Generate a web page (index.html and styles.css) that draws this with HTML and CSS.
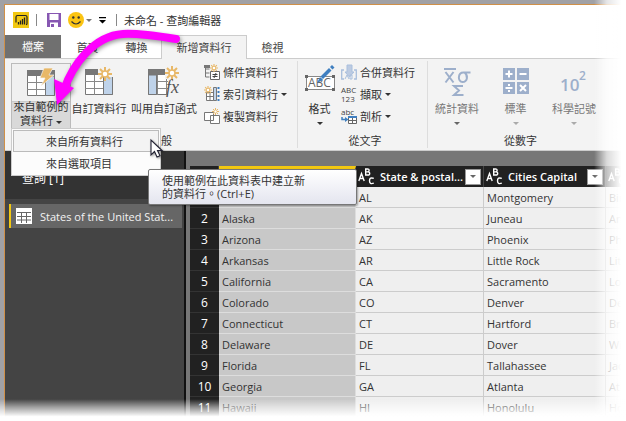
FILE: index.html
```html
<!DOCTYPE html>
<html lang="zh-Hant">
<head>
<meta charset="utf-8">
<title>未命名 - 查詢編輯器</title>
<link rel="stylesheet" href="styles.css">
</head>
<body>
<svg class="defs" aria-hidden="true">
  <symbol id="spark" viewBox="0 0 14 14">
    <g stroke="#e8b868" stroke-width="2"><path d="M7 0v4M7 10v4M0 7h4M10 7h4M2 2l3 3M9 9l3 3M12 2L9 5M5 9l-3 3"/></g>
    <circle cx="7" cy="7" r="3" fill="#fff" stroke="#e8b868" stroke-width="1.5"/>
  </symbol>
  <symbol id="grid" viewBox="0 0 28 26">
    <path d="M.5 .5h27v25h-27z" fill="#fff" stroke="#777"/>
    <path d="M0 0h28v6H0z" fill="#777"/>
    <path d="M9.500 6v20M18.500 6v20M0 12.500h28M0 19.500h28" stroke="#888"/>
  </symbol>
  <symbol id="abc" viewBox="0 0 17 17">
    <g fill="none" stroke="#fff" stroke-width="1.400"><path d="M.8 13L3.500 5.500L6.200 13M1.800 10.500h3.400M7.700 1v6h2q2 0 2-1.600t-2-1.500h-2h1.700q1.700 0 1.700-1.500T9.400 1zM15.800 10.300q-4.300-1.400-4.300 2.500t4.300 2.400"/></g>
  </symbol>
</svg>
<div class="window">
  <header class="titlebar">
    <svg class="logo" width="16" height="16" viewBox="0 0 16 16"><path d="M0 0h16v16H0z" fill="#f2c811"/><path d="M3 10.500V5q0-1.500 1.500-1.500h8Q14 3.500 14 5v6.500q0 1-1 1.200" fill="none" stroke="#222" stroke-width="1.200"/><path d="M5.500 12.500V10M7.500 12.500V8.500M9.500 12.500V7M11.500 12.500V5.500" stroke="#222" stroke-width="1.300"/></svg>
    <span class="bar"></span>
    <button class="plain save" aria-label="儲存"><svg width="14" height="14" viewBox="0 0 14 14"><path d="M0 0h14v14H0z" fill="#8757b2"/><path d="M2.500 1h9v6h-9zM3 9.500h8V14H3z" fill="#fff"/><path d="M4 11h3v3H4z" fill="#8757b2"/></svg></button>
    <button class="plain smile" aria-label="意見反應"><svg width="16" height="16" viewBox="0 0 16 16"><circle cx="8" cy="8" r="8" fill="#fbc412"/><circle cx="5.300" cy="5.500" r="1.200" fill="#333"/><circle cx="10.700" cy="5.500" r="1.200" fill="#333"/><path d="M3.500 9.500q4.500 5 9 0" fill="none" stroke="#333" stroke-width="1.200"/></svg><i class="caret grey"></i></button>
    <button class="plain quick" aria-label="自訂快速存取工具列"><svg width="7" height="7" viewBox="0 0 7 7"><path d="M0 0h7v1.200H0zM0 3h7L3.500 6.500z"/></svg></button>
    <span class="bar"></span>
    <h1>未命名 - 查詢編輯器</h1>
  </header>
  <nav class="tabs">
    <button class="tab file">檔案</button>
    <button class="tab">首頁</button>
    <button class="tab">轉換</button>
    <button class="tab active">新增資料行</button>
    <button class="tab">檢視</button>
  </nav>
  <section class="ribbon">
    <div class="group general">
      <div class="tools">
        <div class="split">
          <button class="big"><svg width="28" height="28" viewBox="0 0 28 28"><use href="#grid" y="2" width="28" height="26"/><path d="M18.500 8h9v19.500h-9z" fill="#bfd3ea" stroke="#777"/><path d="M17 0h9l-4 7h5L14 18l4-8h-5z" fill="#e8b868" stroke="#f3f3f3" stroke-width=".7"/></svg><span>來自範例的<br>資料行 <i class="caret"></i></span></button>
          <div class="menu">
            <button class="item hover">來自所有資料行</button>
            <button class="item">來自選取項目</button>
            <svg class="cursor" width="13" height="19" viewBox="0 0 13 19"><path d="M1 1v15l3.500-3.500L7 18l3-1.300L7.500 11.500H12z" fill="#fff" stroke="#223" stroke-width="1.100"/></svg>
            <div class="tooltip" role="tooltip">使用範例在此資料表中建立新<br>的資料行。(Ctrl+E)</div>
          </div>
        </div>
        <button class="big custom"><svg width="28" height="28" viewBox="0 0 28 28"><use href="#grid" y="2" width="28" height="26"/><path d="M18.500 8h9v19.500h-9z" fill="#bfd3ea" stroke="#777"/><path d="M13 0h15v10H13z" fill="#f3f3f3"/><use href="#spark" x="13" width="14" height="14"/></svg><span>自訂資料行</span></button>
        <button class="big invoke"><svg width="32" height="30" viewBox="0 0 32 30"><use href="#grid" y="3" width="28" height="26"/><path d="M.5 9h8v19.500h-8z" fill="#bfd3ea" stroke="#777"/><path d="M17 0h15v13H17zM20 13h12v17H20z" fill="#f3f3f3"/><use href="#spark" x="17" width="14" height="14"/><text x="18" y="27" class="fx">fx</text></svg><span>叫用自訂函式</span></button>
        <div class="stack">
          <button class="small"><svg width="16" height="16" viewBox="0 0 16 16"><path d="M1.500 2v11M1.500 5h4M1.500 9h4M1.500 13h4" stroke="#777" fill="none"/><path d="M0 1h6v3H0z" fill="#777"/><path d="M6.500 7.500h9v8h-9z" fill="#fff" stroke="#666"/><path d="M8.500 10.500h5M8.500 12.500h5M12 9l-2 5" stroke="#444"/><use href="#spark" x="6" width="8" height="8"/></svg>條件資料行</button>
          <button class="small"><svg width="16" height="16" viewBox="0 0 16 16"><path d="M2.500 6.500h7v8h-7zM2.500 10.500h7M6 7v8" fill="#fff" stroke="#777"/><path d="M9.500 1.500h3v13h-3z" fill="#bfd3ea" stroke="#777"/><path d="M14.500 1v14" stroke="#3f7fc0" stroke-width="2" stroke-dasharray="2 2"/><use href="#spark" width="8" height="8"/></svg>索引資料行 <i class="caret"></i></button>
          <button class="small"><svg width="16" height="16" viewBox="0 0 16 16"><path d="M.5 4.500h9v8h-9zM6.500 7.500h9v8h-9z" fill="#fff" stroke="#777"/><use href="#spark" x="8" width="7" height="7"/></svg>複製資料行</button>
        </div>
      </div>
      <p>一般</p>
    </div>
    <div class="group text">
      <div class="tools">
        <button class="big format"><svg width="30" height="26" viewBox="0 0 30 26"><path d="M1.500 11.500h28v13h-28z" fill="#fff" stroke="#888"/><path d="M0 10h3v3H0zM27 10h3v3h-3zM0 23h3v3H0zM27 23h3v3h-3z" fill="#666"/><text x="3" y="22" class="abc">ABC</text><path d="M12 18l3-6 3 3zM15.500 11.500L24 3l2.500 2.500L18 14zM25 2l2-2 2.500 2.500-2 2z" fill="#3f7fc0"/></svg><span>格式<br><i class="caret"></i></span></button>
        <div class="stack">
          <button class="small"><svg width="16" height="16" viewBox="0 0 16 16"><path d="M3 6H.7v9H3M13 6h2.300v9H13" fill="none" stroke="#a9bfdd" stroke-width="1.300"/><path d="M6 1h5v7h2l-4.500 5L4 8h2z" fill="#bccbe2" stroke="#a9bfdd"/><path d="M4 15l2-4 2 4M9 15v-4h2v4z" fill="none" stroke="#a9bfdd"/></svg>合併資料行</button>
          <button class="small"><svg width="16" height="16" viewBox="0 0 16 16"><text y="7" class="mini">ABC</text><text y="16" class="mini">123</text></svg>擷取 <i class="caret"></i></button>
          <button class="small"><svg width="16" height="16" viewBox="0 0 16 16"><text y="7" class="mini">abc</text><path d="M7.500 9.500h8v6h-8zM7.500 12.500h8M11.500 10v6" fill="#fff" stroke="#666"/><path d="M7 8h9v2H7z" fill="#3f7fc0"/><path d="M1 9v2.500h4" fill="none" stroke="#3f7fc0" stroke-width="1.500"/><path d="M4 9l3.500 2.500L4 14z" fill="#3f7fc0"/></svg>剖析 <i class="caret"></i></button>
        </div>
      </div>
      <p>從文字</p>
    </div>
    <div class="group number">
      <div class="tools">
        <button class="big off"><svg width="28" height="28" viewBox="0 0 28 28" fill="none" stroke="#9dafcb" stroke-width="2"><path d="M1 1h12M2.500 4l8 10.500M10.500 4l-8 10.500M27.500 4.500h-7c-6 0-6 9.500-1 9.500s6-6.500 2-9.500M20 18h-9l5 4.500-5 4.500h9.500"/></svg><span>統計資料<br><i class="caret"></i></span></button>
        <button class="big off pale"><svg width="26" height="26" viewBox="0 0 26 26"><path d="M0 0h12v12H0zM14 0h12v12H14zM0 14h12v12H0zM14 14h12v12H14z" fill="#9dafcb"/><path d="M2.500 6h7M6 2.500v7M16.500 6h7M2.500 20h7M6 16v2M6 22v2M17 17l6 6M23 17l-6 6" stroke="#fff" stroke-width="2"/></svg><span>標準<br><i class="caret"></i></span></button>
        <button class="big off pale"><svg width="28" height="26" viewBox="0 0 28 26"><text x="0" y="23" class="ten">10</text><text x="19" y="12" class="two">2</text></svg><span>科學記號<br><i class="caret"></i></span></button>
      </div>
      <p>從數字</p>
    </div>
  </section>
  <div class="work">
    <aside class="queries">
      <h2>查詢 [1]</h2>
      <a class="query" href="#table"><svg width="16" height="16" viewBox="0 0 16 16"><path d="M0 0h16v16H0z" fill="#fff"/><path d="M1 4.500h14M1 8.500h14M1 12h14M5.500 4v11M10.500 4v11" stroke="#666"/></svg><span>States of the United Stat...</span></a>
    </aside>
    <main id="table">
      <table>
        <colgroup><col class="c-num"><col class="c-name"><col class="c-code"><col class="c-city"><col></colgroup>
        <thead><tr>
          <th></th>
          <th class="selected"><div><svg width="17" height="17"><use href="#abc"/></svg><span></span><button aria-label="篩選"><i class="caret"></i></button></div></th>
          <th><div><svg width="17" height="17"><use href="#abc"/></svg><span>State &amp; postal...</span><button aria-label="篩選"><i class="caret"></i></button></div></th>
          <th><div><svg width="17" height="17"><use href="#abc"/></svg><span>Cities Capital</span><button aria-label="篩選"><i class="caret"></i></button></div></th>
          <th><div><svg width="17" height="17"><use href="#abc"/></svg></div></th>
        </tr></thead>
        <tbody>
          <tr><th></th><td></td><td>AL</td><td>Montgomery</td><td>Birmingham</td></tr>
          <tr><th>2</th><td>Alaska</td><td>AK</td><td>Juneau</td><td>Anchorage</td></tr>
          <tr><th>3</th><td>Arizona</td><td>AZ</td><td>Phoenix</td><td>Phoenix</td></tr>
          <tr><th>4</th><td>Arkansas</td><td>AR</td><td>Little Rock</td><td>Little Rock</td></tr>
          <tr><th>5</th><td>California</td><td>CA</td><td>Sacramento</td><td>Los Angeles</td></tr>
          <tr><th>6</th><td>Colorado</td><td>CO</td><td>Denver</td><td>Denver</td></tr>
          <tr><th>7</th><td>Connecticut</td><td>CT</td><td>Hartford</td><td>Bridgeport</td></tr>
          <tr><th>8</th><td>Delaware</td><td>DE</td><td>Dover</td><td>Wilmington</td></tr>
          <tr><th>9</th><td>Florida</td><td>FL</td><td>Tallahassee</td><td>Jacksonville</td></tr>
          <tr><th>10</th><td>Georgia</td><td>GA</td><td>Atlanta</td><td>Atlanta</td></tr>
          <tr><th>11</th><td>Hawaii</td><td>HI</td><td>Honolulu</td><td>Honolulu</td></tr>
        </tbody>
      </table>
    </main>
  </div>
  <svg class="arrow" width="140" height="90" viewBox="0 0 140 90" aria-hidden="true"><path d="M130 19Q92 13 77 14C47 16 26 46 18 70" fill="none" stroke="#f0f" stroke-width="8" stroke-linecap="round"/><path d="M8 59l20 9L11 85z" fill="#f0f"/></svg>
</div>
</body>
</html>
```
FILE: styles.css
```css
* { box-sizing: border-box; }
body {
  margin: 0;
  background: #a1a1a5;
  font: 11px/13px "Open Sans", "Noto Sans CJK TC", sans-serif;
  color: #333;
}
button { font: inherit; color: inherit; border: 0; background: none; padding: 0; margin: 0; }
h1, h2, p { margin: 0; font: inherit; }
svg { display: block; flex: none; overflow: visible; }
.defs { position: absolute; width: 0; height: 0; overflow: hidden; }
.window {
  position: relative;
  display: flex;
  flex-direction: column;
  height: calc(100vh - 4px);
  margin: 4px 0 0 4px;
  border: solid #d09048;
  border-width: 1px 0 0 1px;
  background: #fff;
}
/* soft edges on the right and bottom */
body::before, body::after { content: ""; position: fixed; right: 0; bottom: 0; z-index: 9; pointer-events: none; }
body::before { top: 0; width: 32px; background: linear-gradient(to right, transparent, #fffb 40%, #fff 85%); }
body::after { left: 0; height: 22px; background: linear-gradient(transparent, #fff8 40%, #fff 80%); }

.caret {
  display: inline-block;
  vertical-align: middle;
  border: 3px solid transparent;
  border-top-color: #333;
  border-bottom: 0;
}
.caret.grey { border-top-color: #777; }

.titlebar { display: flex; align-items: center; height: 30px; padding: 0 8px; }
.bar { width: 1px; height: 12px; background: #888; }
.logo { margin-right: 7px; }
.plain { display: flex; align-items: center; gap: 2px; }
.save { margin-left: 10px; }
.smile { margin-left: 7px; }
.quick { margin: 0 10px 0 7px; }
.titlebar h1 { margin-left: 7px; }

.tabs { display: flex; flex: none; height: 24px; border-bottom: 1px solid #ccc; }
.tab { padding: 0; width: 49px; height: 24px; color: #444; }
.tab.file { width: 56px; background: #707070; color: #fff; height: 23px; }
.file + .tab { margin-left: 2px; }
.tab.active { width: 86px; background: #f3f3f3; border: 1px solid #ccc; border-bottom: 0; }
.active + .tab { margin-left: 1px; }

.ribbon { display: flex; flex: none; height: 92px; background: #f3f3f3; border-bottom: 1px solid #ccc; }
.group { display: flex; flex-direction: column; justify-content: space-between; margin: 2px 0; padding: 2px 0 1px; border-right: 1px solid #ddd; }
.group p { text-align: center; }
.general { flex: none; width: 293px; padding-left: 6px; }
.general p { padding-left: 14px; }
.text { flex: none; width: 130px; padding-left: 5px; }
.number { flex: none; width: 185px; border: 0; }
.tools { display: flex; }
.big { display: flex; flex-direction: column; align-items: center; height: 66px; padding: 4px 0 0; white-space: nowrap; }
.big span { display: block; margin-top: auto; height: 27px; }
.split { position: relative; }
.split .big { width: 60px; border: 1px solid #bbb; background: linear-gradient(#f0f0f0 37px, #bbb 37px, #d9d9d9 38px); }
.split .big span { height: 28px; line-height: 14px; }
.custom { width: 56px; }
.invoke { width: 68px; margin-left: 3px; padding-top: 3px; }
.stack { display: flex; flex-direction: column; gap: 6px; margin: 1px 0 0 6px; }
.small { display: flex; align-items: center; gap: 3px; height: 16px; white-space: nowrap; }
.format { width: 33px; padding-top: 2px; }
.text .stack { margin-left: 5px; }
.number .tools { margin-right: 10px; padding: 0 7px; justify-content: space-between; }
.off { padding-top: 5px; color: #777; }
.off .caret { border-top-color: #666; }
.pale .caret { border-top-color: #aaa; }
.fx { font: italic 18px "Liberation Serif", serif; fill: #555; }
.abc { font: 12px "Open Sans", sans-serif; fill: #666; }
.mini { font: 8px "Open Sans", sans-serif; fill: #444; }
.ten { font: 600 17px "Open Sans", sans-serif; fill: #9dafcb; }
.two { font: 600 12px "Open Sans", sans-serif; fill: #9dafcb; }

.menu {
  position: absolute;
  top: 65px;
  left: 0;
  z-index: 5;
  width: 150px;
  padding: 1px;
  border: 1px solid #ccc;
  background: #fcfcfc;
}
.item { display: block; width: 100%; height: 22px; padding-left: 32px; text-align: left; border: 1px solid transparent; }
.item.hover { background: #f3f3f3; border-color: #bbb; }
.cursor { position: absolute; left: 138px; top: 10px; z-index: 2; filter: drop-shadow(1px 1px 1px #0006); }
.tooltip {
  position: absolute;
  left: 136px;
  top: 40px;
  width: 209px;
  padding: 4px 13px;
  border: 1px solid #777;
  border-radius: 2px;
  background: linear-gradient(#fff, #e4e5ef);
  box-shadow: 1px 1px 2px #0005;
  white-space: nowrap;
}

.work { display: flex; flex: 1; min-height: 0; overflow: hidden; background: #777; }
.queries { flex: none; width: 181px; background: #444; border-right: 2px solid #111; }
.queries h2 { height: 48px; padding: 21px 17px 0; background: #333; color: #fff; font-size: 12px; }
.query {
  display: flex;
  align-items: center;
  gap: 8px;
  height: 24px;
  margin: 5px 2px 0 4px;
  padding-left: 5px;
  border-left: 2px solid #f2c811;
  background: #666;
  color: #f3f3f3;
  text-decoration: none;
}
.query span { white-space: nowrap; }

main { flex: 1; min-width: 0; padding: 15px 0 0 4px; overflow: hidden; }
table { width: 100%; table-layout: fixed; border-spacing: 0; background: #efefef; }
.c-num { width: 29px; }
.c-name { width: 137px; }
.c-code { width: 128px; }
.c-city { width: 122px; }
th, td { height: 21px; padding: 0; overflow: hidden; white-space: nowrap; text-align: left; }
td { padding-left: 3px; border: solid #ccc; border-width: 0 1px 1px 0; }
td:nth-child(2) { background: #c8c8c8; border-color: #ddd; }
thead th { background: #212121; color: #fff; border-right: 1px solid #444; font-weight: 600; }
thead .selected { border-top: 3px solid #f2c811; }
thead div { display: flex; align-items: center; padding: 0 2px; }
thead span { flex: 1; margin-left: 5px; }
thead button { display: flex; align-items: center; justify-content: center; width: 16px; height: 16px; background: #fff; border: 1px solid #999; }
thead .selected div { height: 18px; }
thead .caret { border-top-color: #666; }
tbody th { background: #212121; color: #fff; border-bottom: 1px solid #333; text-align: center; font-weight: 400; font-size: 12px; }

.arrow { position: absolute; left: 41px; top: 15px; z-index: 6; pointer-events: none; filter: drop-shadow(1px 2px 2px #0006); }
```
